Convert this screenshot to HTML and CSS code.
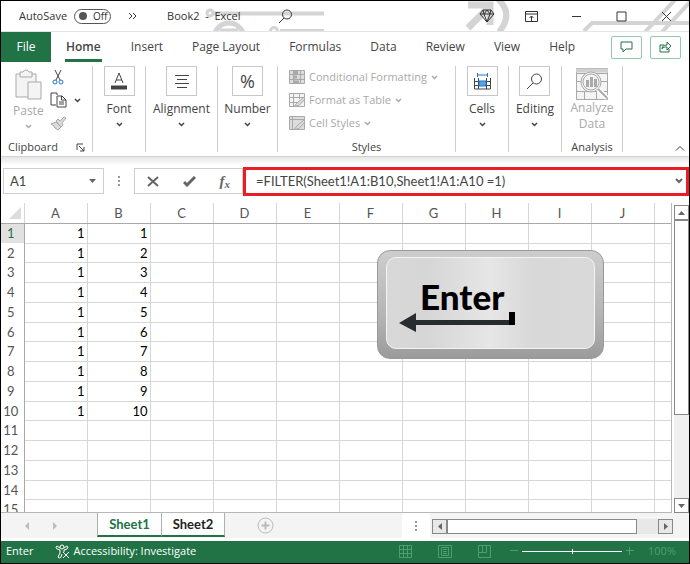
FILE: index.html
```html
<!DOCTYPE html>
<html lang="en">
<head>
<meta charset="utf-8">
<title>Book2 - Excel</title>
<link rel="stylesheet" href="styles.css">
</head>
<body>
<div class="window">
  <header class="titlebar">
    <svg class="circuit" width="690" height="31" viewBox="0 0 690 31" aria-hidden="true">
      <circle cx="209" cy="12" r="3" stroke-width="3"/><path d="M213 12.500H323M279 30H323"/>
      <circle cx="228" cy="37" r="15" stroke-width="5"/><path d="M219 29h18" stroke-width="3"/>
      <circle cx="273" cy="30" r="3.500" stroke-width="3"/>
      <path d="M467 27 488 6M467 4h22v20" stroke-width="7"/><path d="M497-2Q513 13 498 31" stroke-width="6"/>
      <path d="M583 30l8-8h97M644 31 674-1M661 31 689 1"/>
    </svg>
    <label class="autosave">AutoSave <span class="switch"><input type="checkbox"><span class="knob"></span>Off</span></label>
    <button class="more" aria-label="More commands"><svg width="9" height="8" viewBox="0 0 9 8"><path d="M1 1l3 3-3 3M5 1l3 3-3 3"/></svg></button>
    <span class="doc">Book2&nbsp; - &nbsp;Excel</span>
    <button class="search" aria-label="Search"><svg width="15" height="15" viewBox="0 0 15 15"><circle cx="9" cy="5.500" r="4.500"/><path d="M6 9 1 14"/></svg></button>
    <div class="winbtns">
      <button aria-label="Premium"><svg width="16" height="14" viewBox="0 0 16 14"><path d="M4 1h8l3 4-7 8-7-8zM1 5h14M4 1l1 4 3 8 3-8 1-4M5 5l3-4 3 4"/></svg></button>
      <button aria-label="Ribbon display options"><svg width="13" height="11" viewBox="0 0 13 11"><path d="M.5.5h12v10H.5zM.5 3h12M6.500 10V5M4.500 7l2-2 2 2"/></svg></button>
      <button aria-label="Minimize"><svg width="11" height="11" viewBox="0 0 11 11"><path d="M1 5.500h9"/></svg></button>
      <button aria-label="Maximize"><svg width="11" height="11" viewBox="0 0 11 11"><path d="M1 1h9v9H1z"/></svg></button>
      <button aria-label="Close"><svg width="11" height="11" viewBox="0 0 11 11"><path d="M1 1l9 9M10 1 1 10"/></svg></button>
    </div>
  </header>

  <nav class="tabs">
    <a class="file" href="#file">File</a>
    <a class="tab active" href="#home">Home</a>
    <a class="tab" href="#insert">Insert</a>
    <a class="tab" href="#layout">Page Layout</a>
    <a class="tab" href="#formulas">Formulas</a>
    <a class="tab" href="#data">Data</a>
    <a class="tab" href="#review">Review</a>
    <a class="tab" href="#view">View</a>
    <a class="tab" href="#help">Help</a>
    <div class="share">
      <button aria-label="Comments"><svg width="13" height="12" viewBox="0 0 13 12"><path d="M1 1h11v7H6l-3 3V8H1z"/></svg></button>
      <button aria-label="Share"><svg width="13" height="12" viewBox="0 0 13 12"><path d="M5 4H1v7h9V8M3 8c0-3 2-4 5-4V1l4 4-4 4V6C6 6 4 6 3 8z"/></svg></button>
    </div>
  </nav>

  <section class="ribbon" aria-label="Ribbon">
    <div class="group clipboard">
      <div class="clip-body">
        <button class="paste" disabled>
          <svg width="28" height="32" viewBox="0 0 28 32"><path class="soft" d="M2 5h20v23H2z"/><path class="soft" d="M6 3h3q1-2 3-2t3 2h3v5H6z"/><path class="soft" d="M14 13h13v17H14z"/></svg>
          Paste
          <svg class="chev" width="7" height="5" viewBox="0 0 7 5"><path d="M1 1l2.500 2.500L6 1"/></svg>
        </button>
        <div class="clip-tools">
          <button aria-label="Cut"><svg width="12" height="16" viewBox="0 0 12 16"><path d="M3 1l5 10M9 1 4 11"/><circle class="blue" cx="3" cy="13" r="2"/><circle class="blue" cx="9" cy="13" r="2"/></svg></button>
          <button aria-label="Copy"><svg width="17" height="16" viewBox="0 0 17 16"><path d="M6 13H1V1h6v2M7 4h5l4 4v7H7zM11.500 4v4H16M9 10h5M9 12h5"/></svg><svg class="chev" width="7" height="5" viewBox="0 0 7 5"><path d="M1 1l2.500 2.500L6 1"/></svg></button>
          <button aria-label="Format painter" disabled><svg width="17" height="15" viewBox="0 0 17 15"><path class="mid" d="M1 8l5-2 5 5-3 3-3-2-1-2zM6 5l2-2 2 2 4-4 2 1-4 5 1 2-2 2z"/></svg></button>
        </div>
      </div>
      <div class="caption">Clipboard <svg width="9" height="9" viewBox="0 0 9 9"><path d="M1 7V1h6M3 3l5 5M8 4v4H4"/></svg></div>
    </div>
    <div class="group g-font"><button class="big"><span class="tile"><svg width="18" height="19" viewBox="0 0 18 19"><path d="M5 11 9 1l4 10M6 8h6"/><path d="M1 15.500h16" stroke-width="4"/></svg></span>Font<svg class="chev" width="7" height="5" viewBox="0 0 7 5"><path d="M1 1l2.500 2.500L6 1"/></svg></button></div>
    <div class="group g-align"><button class="big"><span class="tile"><svg width="15" height="15" viewBox="0 0 15 15"><path d="M1 1.500h14M3 5.500h10M1 9.500h14M3 13.500h10"/></svg></span>Alignment<svg class="chev" width="7" height="5" viewBox="0 0 7 5"><path d="M1 1l2.500 2.500L6 1"/></svg></button></div>
    <div class="group g-number"><button class="big"><span class="tile percent">%</span>Number<svg class="chev" width="7" height="5" viewBox="0 0 7 5"><path d="M1 1l2.500 2.500L6 1"/></svg></button></div>
    <div class="group g-styles">
      <div class="style-list">
        <button disabled><svg width="16" height="14" viewBox="0 0 16 14"><path class="mid" d="M.5.500h15v13H.5z"/><path d="M.5 4.500h15M.5 9.500h15M4.500 0v14M11.500 0v14"/><path d="M5 2.500h4M5 7h3M5 12h5" stroke-width="3"/></svg>Conditional Formatting<svg class="chev" width="7" height="5" viewBox="0 0 7 5"><path d="M1 1l2.500 2.500L6 1"/></svg></button>
        <button disabled><svg width="16" height="14" viewBox="0 0 16 14"><path class="soft" d="M.5.500h15v13H.5z"/><path d="M.5 4.500h15M.5 9.500h9M4.500 0v14M10.500 0v6"/><path class="mid" d="M15 4 8 10l-3 3.500 5-1L16 6z"/></svg>Format as Table<svg class="chev" width="7" height="5" viewBox="0 0 7 5"><path d="M1 1l2.500 2.500L6 1"/></svg></button>
        <button disabled><svg width="16" height="14" viewBox="0 0 16 14"><path class="mid" d="M.5.500h15v13H.5z"/><path d="M.5 3.500h15M3.500 0v14"/><path class="mid" d="M15 4 8 10l-3 3.500 5-1L16 6z"/></svg>Cell Styles<svg class="chev" width="7" height="5" viewBox="0 0 7 5"><path d="M1 1l2.500 2.500L6 1"/></svg></button>
      </div>
      <div class="caption">Styles</div>
    </div>
    <div class="group g-cells"><button class="big"><span class="tile"><svg width="17" height="17" viewBox="0 0 17 17"><path d="M.5 5v11h16V5M.5 8.500h16M.5 12.500h16M4.500 5v11M12.500 5v11"/><path d="M5 8h7v5H5z" class="bluefill"/><path class="blue" d="M3.500 0v4M13.500 0v4M4 2h9"/></svg></span>Cells<svg class="chev" width="7" height="5" viewBox="0 0 7 5"><path d="M1 1l2.500 2.500L6 1"/></svg></button></div>
    <div class="group g-edit"><button class="big"><span class="tile"><svg width="17" height="17" viewBox="0 0 17 17"><circle cx="10.500" cy="6" r="5"/><path d="M7 10 1 16"/></svg></span>Editing<svg class="chev" width="7" height="5" viewBox="0 0 7 5"><path d="M1 1l2.500 2.500L6 1"/></svg></button></div>
    <div class="group g-analysis">
      <button class="analyze" disabled><svg width="32" height="32" viewBox="0 0 32 32"><path class="soft" d="M.5.500h31v31H.5z"/><path d="M0 2.500h32" stroke="#d0d0d0" stroke-width="4"/><path d="M1 23.500h30M8.500 23v8M20.500 23v8M1 13.500h30M0 5.500h32"/><circle class="soft" cx="15" cy="14" r="10"/><circle cx="15" cy="14" r="8"/><path d="M22 21l9 9" stroke="#fff" stroke-width="5"/><path d="M22 21l9 9" stroke-width="2"/><path d="M11.500 12v7M15.500 9v10M19.500 11v8" stroke-width="3"/></svg>Analyze<br>Data</button>
      <div class="caption">Analysis</div>
    </div>
    <button class="collapse" aria-label="Collapse ribbon"><svg width="10" height="7" viewBox="0 0 10 7"><path d="M1 5.500l4-4 4 4"/></svg></button>
  </section>

  <section class="formula" aria-label="Formula bar">
    <div class="namebox"><input aria-label="Name box" value="A1"><svg width="7" height="4" viewBox="0 0 7 4"><path class="solid" d="M0 0h7L3.500 4z"/></svg></div>
    <span class="dots"></span>
    <div class="fx">
      <button aria-label="Cancel"><svg width="12" height="11" viewBox="0 0 12 11"><path stroke-width="2" d="M1 1l10 9M11 1 1 10"/></svg></button>
      <button aria-label="Enter"><svg width="13" height="11" viewBox="0 0 13 11"><path stroke-width="3" d="M1 6l3 3 8-8"/></svg></button>
      <button class="fxbtn" aria-label="Insert function"><i>f</i><i class="sub">x</i></button>
    </div>
    <div class="entry"><input aria-label="Formula" value="=FILTER(Sheet1!A1:B10,Sheet1!A1:A10 =1)"><svg width="8" height="6" viewBox="0 0 8 6"><path stroke-width="2" d="M1 1l3 3 3-3"/></svg></div>
  </section>

  <main class="work">
    <div class="sheet">
      <table>
        <colgroup><col class="rowno"><col class="c"><col class="c"><col class="c"><col class="c"><col class="c"><col class="c"><col class="c"><col class="c"><col class="c"><col class="c"><col></colgroup>
        <thead><tr><th><svg width="12" height="12" viewBox="0 0 12 12"><path class="corner" d="M12 0v12H0z"/></svg></th><th>A</th><th>B</th><th>C</th><th>D</th><th>E</th><th>F</th><th>G</th><th>H</th><th>I</th><th>J</th><th></th></tr></thead>
        <tbody>
          <tr><th class="sel">1</th><td>1</td><td>1</td><td></td><td></td><td></td><td></td><td></td><td></td><td></td><td></td><td></td></tr>
          <tr><th>2</th><td>1</td><td>2</td><td></td><td></td><td></td><td></td><td></td><td></td><td></td><td></td><td></td></tr>
          <tr><th>3</th><td>1</td><td>3</td><td></td><td></td><td></td><td></td><td></td><td></td><td></td><td></td><td></td></tr>
          <tr><th>4</th><td>1</td><td>4</td><td></td><td></td><td></td><td></td><td></td><td></td><td></td><td></td><td></td></tr>
          <tr><th>5</th><td>1</td><td>5</td><td></td><td></td><td></td><td></td><td></td><td></td><td></td><td></td><td></td></tr>
          <tr><th>6</th><td>1</td><td>6</td><td></td><td></td><td></td><td></td><td></td><td></td><td></td><td></td><td></td></tr>
          <tr><th>7</th><td>1</td><td>7</td><td></td><td></td><td></td><td></td><td></td><td></td><td></td><td></td><td></td></tr>
          <tr><th>8</th><td>1</td><td>8</td><td></td><td></td><td></td><td></td><td></td><td></td><td></td><td></td><td></td></tr>
          <tr><th>9</th><td>1</td><td>9</td><td></td><td></td><td></td><td></td><td></td><td></td><td></td><td></td><td></td></tr>
          <tr><th>10</th><td>1</td><td>10</td><td></td><td></td><td></td><td></td><td></td><td></td><td></td><td></td><td></td></tr>
          <tr><th>11</th><td></td><td></td><td></td><td></td><td></td><td></td><td></td><td></td><td></td><td></td><td></td></tr>
          <tr><th>12</th><td></td><td></td><td></td><td></td><td></td><td></td><td></td><td></td><td></td><td></td><td></td></tr>
          <tr><th>13</th><td></td><td></td><td></td><td></td><td></td><td></td><td></td><td></td><td></td><td></td><td></td></tr>
          <tr><th>14</th><td></td><td></td><td></td><td></td><td></td><td></td><td></td><td></td><td></td><td></td><td></td></tr>
          <tr><th>15</th><td></td><td></td><td></td><td></td><td></td><td></td><td></td><td></td><td></td><td></td><td></td></tr>
        </tbody>
      </table>
      <div class="key"><div class="keycap">
        <span>Enter</span>
        <svg width="117" height="22" viewBox="0 0 117 22" aria-hidden="true"><path class="shaft" d="M0 12 17 2v7h93v5H17v7z"/><path class="hook" d="M110 1h6v13h-6z"/></svg>
      </div></div>
    </div>
    <div class="vscroll">
      <button aria-label="Scroll up"><svg width="7" height="4" viewBox="0 0 7 4"><path class="solid" d="M0 4h7L3.500 0z"/></svg></button>
      <div class="vtrack"><div class="vthumb"></div></div>
      <button aria-label="Scroll down"><svg width="7" height="4" viewBox="0 0 7 4"><path class="solid" d="M0 0h7L3.500 4z"/></svg></button>
    </div>
  </main>

  <div class="sheetbar">
    <div class="nav">
      <button aria-label="Previous sheet"><svg width="4" height="8" viewBox="0 0 4 8"><path class="faint" d="M4 0v8L0 4z"/></svg></button>
      <button aria-label="Next sheet"><svg width="4" height="8" viewBox="0 0 4 8"><path class="faint" d="M0 0v8l4-4z"/></svg></button>
    </div>
    <button class="stab on">Sheet1</button>
    <button class="stab">Sheet2</button>
    <button class="add" aria-label="New sheet"><svg width="17" height="17" viewBox="0 0 17 17"><circle cx="8.500" cy="8.500" r="7.500"/><path stroke-width="2" d="M4.500 8.500h8M8.500 4.500v8"/></svg></button>
    <div class="grip"><span class="dots"></span></div>
    <div class="hscroll">
      <button aria-label="Scroll left"><svg width="4" height="7" viewBox="0 0 4 7"><path class="solid" d="M4 0v7L0 3.500z"/></svg></button>
      <div class="htrack"><div class="hthumb"></div></div>
      <button aria-label="Scroll right"><svg width="4" height="7" viewBox="0 0 4 7"><path class="solid" d="M0 0v7l4-3.500z"/></svg></button>
    </div>
  </div>

  <footer class="status">
    <span class="mode">Enter</span>
    <svg width="15" height="15" viewBox="0 0 15 15"><circle cx="7" cy="3" r="2"/><path d="M5 4 2 2Q0 3 2 5l3 1v3l-2 4q1 2 3 0l1-3M9 4l3-2q2 1 0 3L9 6v2M8 8l6 6M14 8l-6 6"/></svg>
    <button class="access">Accessibility: Investigate</button>
    <div class="views">
      <button aria-label="Normal view"><svg width="13" height="13" viewBox="0 0 13 13"><path d="M.5.500h12v12H.5zM.5 4.500h12M.5 8.500h12M4.500.500v12M8.500.500v12"/></svg></button>
      <button aria-label="Page layout view"><svg width="14" height="13" viewBox="0 0 14 13"><path d="M.5.500h13v12H.5zM3.500 2.500h7v8h-7zM5 4.500h4M5 6.500h4M5 8.500h4"/></svg></button>
      <button aria-label="Page break view"><svg width="13" height="13" viewBox="0 0 13 13"><path d="M.5.500h12v12H.5zM4.500.500v7h4v-7M4.500 7.500h-4"/></svg></button>
    </div>
    <div class="zoom"><button aria-label="Zoom out"><svg width="8" height="8" viewBox="0 0 8 8"><path d="M0 3.500h8"/></svg></button><input type="range" aria-label="Zoom" min="0" max="200" value="100"><button aria-label="Zoom in"><svg width="8" height="8" viewBox="0 0 8 8"><path d="M0 3.500h8M3.500 0v8"/></svg></button></div>
    <span class="pct">100%</span>
  </footer>
</div>
</body>
</html>
```
FILE: styles.css
```css
* { box-sizing: border-box; }
body { margin: 0; font: 12px/16px "Open Sans", "Noto Sans", sans-serif; color: #444; }
button { font: inherit; color: inherit; background: none; border: 0; padding: 0; display: flex; align-items: center; justify-content: center; }
input { font: inherit; color: inherit; border: 0; background: none; padding: 0; margin: 0; outline: 0; min-width: 0; }
svg { fill: none; stroke: currentColor; flex: none; display: block; }
.solid { fill: #666; stroke: none; }
.faint { fill: #bcbcbc; stroke: none; }
.corner { fill: #dcdcdc; stroke: none; }
.window { display: flex; flex-direction: column; height: 100vh; border: 1px solid #000; background: #fff; overflow: hidden; }

.titlebar { position: relative; display: flex; align-items: center; flex: 0 0 31px; border-bottom: 1px solid #e4e4e4; padding-left: 18px; overflow: hidden; color: #333; }
.circuit { position: absolute; left: 0; top: 0; stroke: #d4d4d4; stroke-width: 4px; }
.titlebar > :not(.circuit) { position: relative; }
.autosave { display: flex; align-items: center; gap: 7px; font-size: 11px; }
.switch { display: flex; align-items: center; gap: 6px; width: 37px; height: 15px; border: 1px solid #555; border-radius: 8px; padding-left: 4px; font-size: 10px; }
.switch input { position: absolute; opacity: 0; }
.knob { width: 8px; height: 8px; border-radius: 50%; background: #555; }
.more { margin-left: 17px; }
.doc { margin-left: 30px; font-size: 11px; }
.search { margin-left: 37px; }
.winbtns { display: flex; margin-left: auto; }
.winbtns button { width: 45px; height: 28px; }
.winbtns svg { shape-rendering: geometricPrecision; }

.tabs { display: flex; align-items: stretch; flex: 0 0 30px; }
.tabs a { color: #444; text-decoration: none; display: flex; align-items: center; }
.tabs .file { width: 50px; justify-content: center; background: #217346; color: #fff; }
.tab { margin-left: 29px; border-bottom: 3px solid transparent; padding-top: 3px; }
.tabs .file + .tab { margin-left: 14px; padding: 3px 1px 0; }
.tabs .active { font-weight: 600; border-color: #217346; }
.share { display: flex; gap: 8px; align-items: center; margin: 0 8px 0 auto; color: #217346; }
.share button { width: 31px; height: 23px; border: 1px solid #93c8a8; border-radius: 2px; }

.ribbon { display: flex; flex: 0 0 95px; padding: 4px 0; border-bottom: 1px solid #d2d2d2; }
.group { display: flex; flex-direction: column; align-items: center; border-right: 1px solid #cfcfcf; flex: none; width: 53px; }
.clipboard { width: 92px; }
.g-align { width: 72px; }
.g-number { width: 60px; }
.g-styles { width: 178px; }
.g-analysis { width: 61px; }
.big { flex-direction: column; }
.tile { display: flex; align-items: center; justify-content: center; width: 31px; height: 30px; border: 1px solid #c8c8c8; margin-bottom: 5px; }
.percent { font-size: 18px; }
.chev { margin-top: 5px; stroke-width: 1.5px; }
.caption { margin-top: auto; display: flex; gap: 18px; align-items: center; font-size: 11px; line-height: 10px; }
.clip-body { display: flex; width: 100%; padding: 3px 0 0 12px; }
button:disabled { color: #a9a9a9; }
.paste { flex-direction: column; justify-content: flex-start; }
.paste svg:first-child { margin-bottom: 2px; }
.soft { fill: #f4f4f4; }
.mid { fill: #dcdcdc; }
.blue { stroke: #1e74c4; }
.bluefill { stroke: #1e74c4; fill: #5aa5e6; }
.clip-tools { display: flex; flex-direction: column; gap: 7px; margin-left: 6px; }
.clip-tools button { height: 16px; gap: 7px; justify-content: flex-start; }
.clip-tools button:first-child { padding-left: 2px; }
.clip-tools .chev, .style-list .chev { margin-top: 0; }
.style-list { width: 100%; padding: 3px 0 0 11px; display: flex; flex-direction: column; gap: 7px; font-size: 11px; }
.style-list button { justify-content: flex-start; gap: 4px; height: 16px; }
.analyze { flex-direction: column; padding-top: 2px; }
.collapse { margin: auto 4px 0 auto; }

.formula { display: flex; align-items: center; flex: 0 0 46px; background: linear-gradient(#e6e6e6, #fff 8px); padding: 2px 0 0 2px; }
.namebox { display: flex; align-items: center; justify-content: space-between; width: 101px; height: 26px; border: 1px solid #cfcfcf; padding: 0 7px 0 6px; }
.namebox input { flex: 1; }
.namebox, .entry { font-family: Lato, sans-serif; font-size: 13px; }
.dots { width: 2px; height: 10px; background: repeating-linear-gradient(#999 0 2px, transparent 2px 4px); }
.formula .dots { margin: 0 14px; }
.fx { display: flex; align-items: center; justify-content: space-around; width: 109px; height: 26px; border: 1px solid #cfcfcf; color: #666; }
.fxbtn { font: bold 15px "Liberation Serif", serif; }
.sub { font-size: 11px; padding-top: 5px; }
.entry { display: flex; align-items: center; flex: 1; height: 29px; border: 3px solid #ec1c24; padding: 0 3px 0 10px; }
.entry input { flex: 1; }
.entry svg { color: #666; }

.work { display: flex; flex: 1; min-height: 0; }
.sheet { position: relative; flex: 1; min-width: 0; overflow: hidden; border-right: 1px solid #b8b8b8; border-bottom: 1px solid #b8b8b8; }
table { table-layout: fixed; border-collapse: collapse; width: 100%; font-family: Lato, sans-serif; font-size: 13px; line-height: 16px; color: #000; }
.rowno { width: 23px; }
.c { width: 63px; }
th, td { padding: 0 2px 0 0; border-right: 1px solid #d6d6d6; border-bottom: 1px solid #d6d6d6; height: 20px; text-align: right; font-weight: normal; }
th:last-child, td:last-child { border-right: 0; }
tbody tr:nth-child(4n+2) > * { height: 19px; }
thead th { text-align: center; border-bottom-color: #a8a8a8; color: #555; padding: 0; }
thead svg { margin-left: 8px; }
tbody th { text-align: center; padding: 0 3px 0 0; color: #555; border-color: transparent #a8a8a8 transparent transparent; }
tbody .sel { background: #e1e1e1; color: #217346; }
.key { position: absolute; left: 376px; top: 47px; width: 227px; height: 109px; border: 1px solid #999; border-radius: 13px; background: linear-gradient(#cdcdcd, #b5b5b5 60%, #9b9b9b); padding: 6px 8px 9px; }
.keycap { height: 100%; border: 1px solid #f4f4f4; border-radius: 10px; background: linear-gradient(90deg, #d8d8d8, #d6d6d6 20%, #e6e6e6 50%, #d8d8d8 70%, #d9d9d9); padding: 23px 0 0 12px; display: flex; flex-direction: column; }
.keycap span { font: 900 35px/30px Lato, sans-serif; padding-left: 21px; color: #000; }
.shaft { fill: #262c30; stroke: none; }
.hook { fill: #000; stroke: none; }
.vscroll { width: 15px; margin-left: 2px; padding-top: 2px; display: flex; flex-direction: column; background: #fff; }
.vscroll button { height: 15px; border: 1px solid #888; }
.vtrack { flex: 1; background: #f0f0f0; }
.vthumb { height: 70%; border: 1px solid #888; background: #fff; }

.sheetbar { display: flex; flex: 0 0 28px; background: #f4f4f4; border-bottom: 3px solid #fff; }
.nav { display: flex; width: 96px; padding-left: 24px; gap: 24px; }
.stab { width: 63px; height: 24px; border: 1px solid #b0b0b0; border-width: 0 1px 0 0; border-bottom: 2px solid #217346; background: #fff; font-weight: bold; font-family: Lato, sans-serif; font-size: 13px; color: #222; }
.on { width: 65px; border-left: 1px solid #b0b0b0; color: #217346; }
.add { margin-left: 32px; color: #bbb; }
.grip { margin-left: auto; width: 28px; background: #fff; display: flex; align-items: center; justify-content: center; }
.hscroll { display: flex; width: 241px; height: 15px; margin: 6px 16px 0 2px; background: #e8e8e8; }
.hscroll button { width: 15px; border: 1px solid #888; }
.htrack { flex: 1; }
.hthumb { width: 90%; height: 100%; border: 1px solid #888; background: #fff; }

.status { display: flex; align-items: center; flex: 0 0 22px; background: #217346; color: #fff; font-size: 11px; padding: 0 13px 2px 5px; }
.mode { margin-right: 22px; }
.access { margin-left: 3px; }
.views { display: flex; gap: 26px; margin-left: auto; color: #4f9c70; }
.zoom { display: flex; align-items: center; gap: 4px; margin-left: 19px; color: #4f9c70; }
.zoom input { appearance: none; width: 100px; height: 9px; background: linear-gradient(#fff, #fff) center / 100% 1px no-repeat; }
.zoom input::-webkit-slider-thumb { appearance: none; width: 1px; height: 5px; background: #fff; }
.pct { margin-left: 14px; color: #4f9c70; }
```
